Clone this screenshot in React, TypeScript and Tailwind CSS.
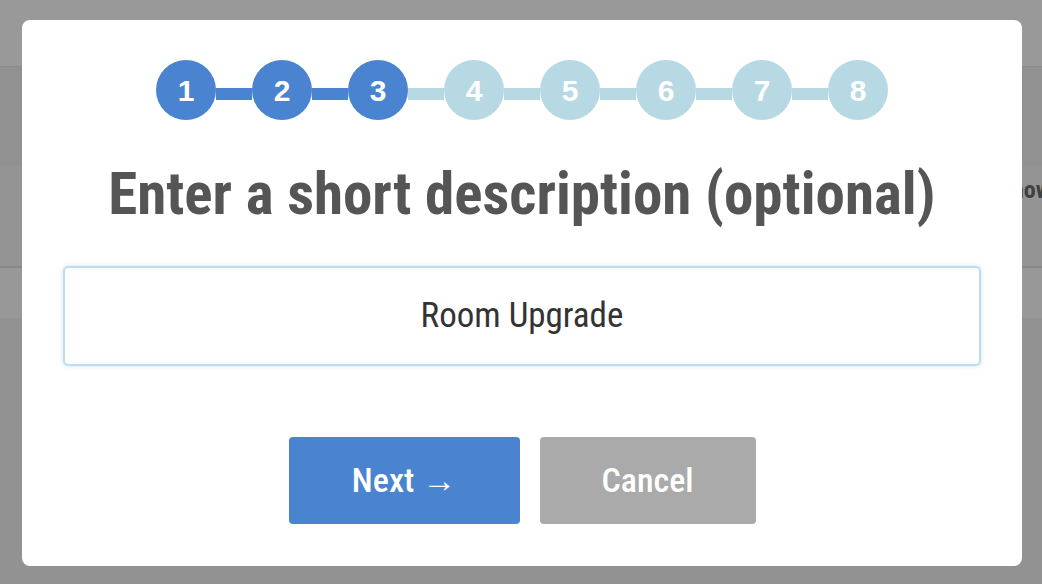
import React from "react";

const steps = [1, 2, 3, 4, 5, 6, 7, 8];
const current = 3;

export default function App() {
  return (
    <div className="relative w-[1042px] h-[584px] overflow-hidden bg-[#929292] font-['Roboto',sans-serif]">
      {/* dimmed page behind the modal */}
      <div className="flex flex-col">
        <div className="h-[66px] bg-[#999999]" />
        <div className="h-px bg-[#8b8b8b]" />
        <div className="h-[99px] bg-[#919191]" />
        <div className="h-[100px] bg-[#949494] flex items-start justify-end pt-[4px]">
          <span className="mr-[-9px] text-[24px] leading-[40px] font-bold text-[#3f3f3f] [font-stretch:75%]">now</span>
        </div>
        <div className="h-[2px] bg-[#888888]" />
        <div className="h-[50px] bg-[#989898]" />
        <div className="h-[266px] bg-[#929292]" />
      </div>

      {/* modal */}
      <div className="absolute left-[22px] top-[20px] w-[1000px] h-[546px] bg-white rounded-[8px] flex flex-col items-center pt-[40px]">
        <div className="flex items-center">
          {steps.map((s, i) => (
            <React.Fragment key={s}>
              {i > 0 && (
                <div
                  className={
                    s <= current
                      ? "w-[36px] h-[12px] mt-[8px] bg-[#4a83d0]"
                      : "w-[36px] h-[12px] mt-[8px] bg-[#b7d9e4]"
                  }
                />
              )}
              <div
                className={
                  s <= current
                    ? "w-[60px] h-[60px] rounded-full bg-[#4a83d0] flex items-center justify-center text-white text-[30px] font-bold font-['Liberation_Sans',sans-serif]"
                    : "w-[60px] h-[60px] rounded-full bg-[#b7d9e4] flex items-center justify-center text-white text-[30px] font-bold font-['Liberation_Sans',sans-serif]"
                }
              >
                {s}
              </div>
            </React.Fragment>
          ))}
        </div>

        <h1 className="mt-[39px] text-[59px] leading-[70px] font-bold text-[#555555] [font-stretch:75%]">
          Enter a short description (optional)
        </h1>

        <div className="mt-[37px] w-[918px] h-[100px] rounded-[5px] border-2 border-[#bddcee] shadow-[0_0_4px_rgba(150,200,230,0.5)] flex items-center justify-center">
          <span className="text-[35px] text-[#333333] [font-stretch:75%]">Room Upgrade</span>
        </div>

        <div className="mt-[71px] flex gap-[20px]">
          <button className="w-[231px] h-[87px] rounded-[4px] bg-[#4a83d0] text-white text-[34px] font-medium [font-stretch:75%]">
            Next <span className="font-bold">→</span>
          </button>
          <button className="w-[216px] h-[87px] rounded-[4px] bg-[#aaaaaa] text-white text-[34px] font-medium [font-stretch:75%]">
            Cancel
          </button>
        </div>
      </div>
    </div>
  );
}
